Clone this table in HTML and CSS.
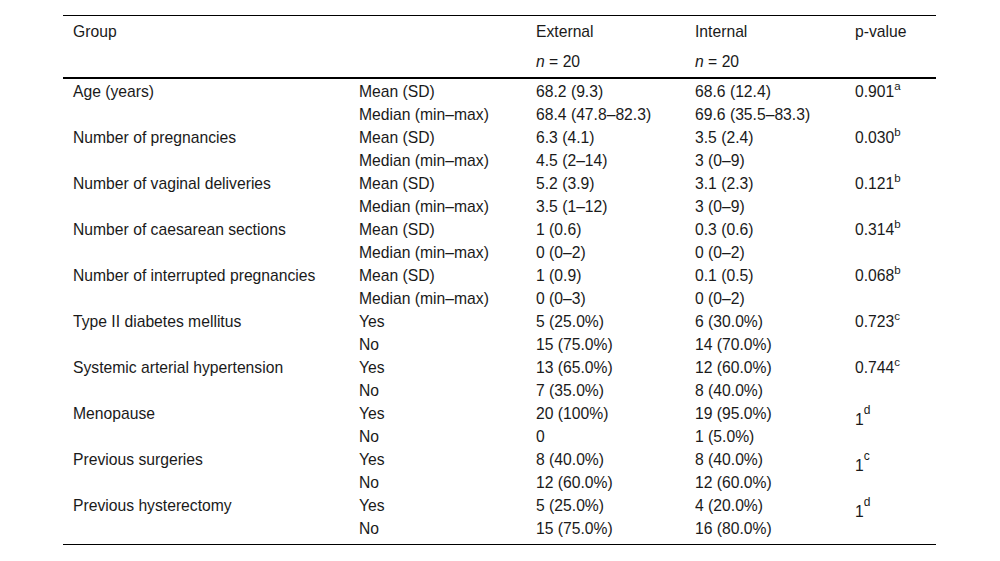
FILE: index.html
```html
<!DOCTYPE html>
<html lang="en">
<head>
<meta charset="utf-8">
<title>Table</title>
<link rel="stylesheet" href="styles.css">
</head>
<body>
<table class="data">
  <colgroup>
    <col class="c1"><col class="c2"><col class="c3"><col class="c4"><col class="c5">
  </colgroup>
  <thead>
    <tr class="h1">
      <th colspan="2">Group</th>
      <th>External</th>
      <th>Internal</th>
      <th>p-value</th>
    </tr>
    <tr class="h2">
      <th colspan="2"></th>
      <th><i>n</i> = 20</th>
      <th><i>n</i> = 20</th>
      <th></th>
    </tr>
  </thead>
  <tbody>
    <tr class="first"><td rowspan="2">Age (years)</td><td>Mean (SD)</td><td>68.2 (9.3)</td><td>68.6 (12.4)</td><td rowspan="2" class="p">0.901<sup>a</sup></td></tr>
    <tr><td>Median (min–max)</td><td>68.4 (47.8–82.3)</td><td>69.6 (35.5–83.3)</td></tr>
    <tr><td rowspan="2">Number of pregnancies</td><td>Mean (SD)</td><td>6.3 (4.1)</td><td>3.5 (2.4)</td><td rowspan="2" class="p">0.030<sup>b</sup></td></tr>
    <tr><td>Median (min–max)</td><td>4.5 (2–14)</td><td>3 (0–9)</td></tr>
    <tr><td rowspan="2">Number of vaginal deliveries</td><td>Mean (SD)</td><td>5.2 (3.9)</td><td>3.1 (2.3)</td><td rowspan="2" class="p">0.121<sup>b</sup></td></tr>
    <tr><td>Median (min–max)</td><td>3.5 (1–12)</td><td>3 (0–9)</td></tr>
    <tr><td rowspan="2">Number of caesarean sections</td><td>Mean (SD)</td><td>1 (0.6)</td><td>0.3 (0.6)</td><td rowspan="2" class="p">0.314<sup>b</sup></td></tr>
    <tr><td>Median (min–max)</td><td>0 (0–2)</td><td>0 (0–2)</td></tr>
    <tr><td rowspan="2">Number of interrupted pregnancies</td><td>Mean (SD)</td><td>1 (0.9)</td><td>0.1 (0.5)</td><td rowspan="2" class="p">0.068<sup>b</sup></td></tr>
    <tr><td>Median (min–max)</td><td>0 (0–3)</td><td>0 (0–2)</td></tr>
    <tr><td rowspan="2">Type II diabetes mellitus</td><td>Yes</td><td>5 (25.0%)</td><td>6 (30.0%)</td><td rowspan="2" class="p">0.723<sup>c</sup></td></tr>
    <tr><td>No</td><td>15 (75.0%)</td><td>14 (70.0%)</td></tr>
    <tr><td rowspan="2">Systemic arterial hypertension</td><td>Yes</td><td>13 (65.0%)</td><td>12 (60.0%)</td><td rowspan="2" class="p">0.744<sup>c</sup></td></tr>
    <tr><td>No</td><td>7 (35.0%)</td><td>8 (40.0%)</td></tr>
    <tr><td rowspan="2">Menopause</td><td>Yes</td><td>20 (100%)</td><td>19 (95.0%)</td><td rowspan="2" class="p">1<sup class="hi">d</sup></td></tr>
    <tr><td>No</td><td>0</td><td>1 (5.0%)</td></tr>
    <tr><td rowspan="2">Previous surgeries</td><td>Yes</td><td>8 (40.0%)</td><td>8 (40.0%)</td><td rowspan="2" class="p">1<sup class="hi">c</sup></td></tr>
    <tr><td>No</td><td>12 (60.0%)</td><td>12 (60.0%)</td></tr>
    <tr><td rowspan="2">Previous hysterectomy</td><td>Yes</td><td>5 (25.0%)</td><td>4 (20.0%)</td><td rowspan="2" class="p">1<sup class="hi">d</sup></td></tr>
    <tr class="last"><td>No</td><td>15 (75.0%)</td><td>16 (80.0%)</td></tr>
  </tbody>
</table>
</body>
</html>
```

FILE: styles.css
```css
html, body {
  margin: 0;
  padding: 0;
  background: #ffffff;
}

body {
  font-family: "Liberation Sans", Arial, sans-serif;
  font-size: 15.7px;
  color: #1a1a1a;
}

.data {
  border-collapse: collapse;
  width: 873px;
  margin: 15px 0 0 63px;
  table-layout: fixed;
  border-top: 1px solid #000;
  border-bottom: 1px solid #000;
}

.c1 { width: 286px; }
.c2 { width: 177px; }
.c3 { width: 159px; }
.c4 { width: 160px; }
.c5 { width: 91px; }

.data th,
.data td {
  text-align: left;
  font-weight: normal;
  vertical-align: top;
  padding: 0 0 0 10px;
  line-height: 23px;
  height: 23px;
  white-space: nowrap;
}

.data thead th {
  padding-top: 4px;
  padding-bottom: 4px;
}

.data thead .h2 th {
  padding-top: 3px;
}

.data thead .h2 {
  border-bottom: 2px solid #000;
}

.data tbody .first td {
  padding-top: 1px;
}

.data tbody .last td {
  padding-bottom: 4px;
}

.data sup {
  font-size: 11.5px;
  line-height: 1;
  vertical-align: 7px;
}

.data sup.hi {
  font-size: 12px;
  line-height: 16px;
  vertical-align: 11px;
}
```
